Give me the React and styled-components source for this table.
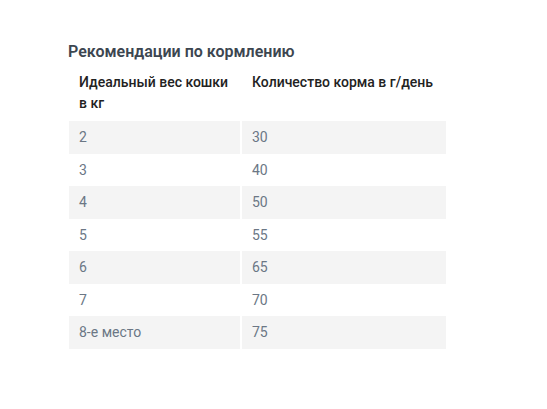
import React from "react";
import styled, { createGlobalStyle } from "styled-components";

const GlobalStyle = createGlobalStyle`
    body {
        margin: 0;
        background: #fff;
        font-family: Roboto, "Liberation Sans", sans-serif;
    }
`

const Section = styled.section`
    padding: 42px 0 0 68px;
`

const Title = styled.h3`
    margin: 0 0 2px;
    font-size: 16px;
    line-height: 20px;
    font-weight: 600;
    color: #3c4650;
`

const Table = styled.table`
    width: 381px;
    margin-left: -1px;
    table-layout: fixed;
    border-collapse: separate;
    border-spacing: 2px 0;
`

const HeadCell = styled.th`
    width: ${(p) => p.$width || "auto"};
    padding: 8px 10px 7px 10px;
    text-align: left;
    vertical-align: top;
    font-size: 14px;
    line-height: 21px;
    font-weight: 500;
    color: #222;
`

const Row = styled.tr`
    background: ${(p) => (p.$striped ? "#f4f4f4" : "#fff")};
`

const Cell = styled.td`
    padding: 6px 10px;
    font-size: 14px;
    line-height: 20.5px;
    color: #6b7785;
`

const rows = [
    ["2", "30"],
    ["3", "40"],
    ["4", "50"],
    ["5", "55"],
    ["6", "65"],
    ["7", "70"],
    ["8-е место", "75"],
]

const App = () => {
    return (
        <>
            <GlobalStyle />
            <Section>
                <Title>Рекомендации по кормлению</Title>
                <Table>
                    <thead>
                        <tr>
                            <HeadCell $width="151px">Идеальный вес кошки в кг</HeadCell>
                            <HeadCell>Количество корма в г/день</HeadCell>
                        </tr>
                    </thead>
                    <tbody>
                        {rows.map((r, i) => (
                            <Row key={i} $striped={i % 2 === 0}>
                                <Cell>{r[0]}</Cell>
                                <Cell>{r[1]}</Cell>
                            </Row>
                        ))}
                    </tbody>
                </Table>
            </Section>
        </>
    )
}

export default App;
